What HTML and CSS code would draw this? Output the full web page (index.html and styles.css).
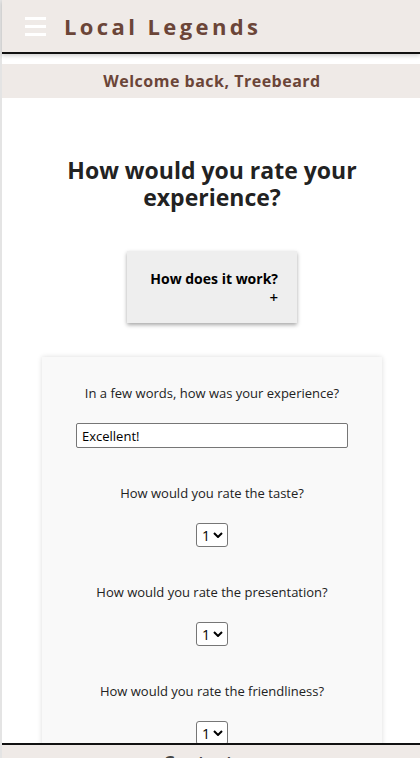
FILE: index.html
```html
<!DOCTYPE html>
<html lang="en">
<head>
<meta charset="utf-8">
<title>Local Legends</title>
<link rel="stylesheet" href="styles.css">
</head>
<body>
<div class="page">
  <header class="topbar">
    <button class="burger" aria-label="Menu"><span></span><span></span><span></span></button>
    <span class="brand">Local Legends</span>
  </header>
  <div class="welcome">Welcome back, Treebeard</div>
  <main class="content">
    <h1 class="title">How would you rate your experience?</h1>
    <div class="how">
      <div class="how-title">How does it work?</div>
      <div class="how-plus">+</div>
    </div>
    <form class="card">
      <div class="group">
        <label class="lbl" for="words">In a few words, how was your experience?</label>
        <input class="text" id="words" type="text" value="Excellent!">
      </div>
      <div class="group">
        <label class="lbl" for="taste">How would you rate the taste?</label>
        <div class="sel"><select id="taste"><option>1</option><option>2</option><option>3</option><option>4</option><option>5</option></select><svg class="chev" viewBox="0 0 10 6" width="10" height="6"><path d="M1 1l4 4 4-4" fill="none" stroke="#000" stroke-width="2"/></svg></div>
      </div>
      <div class="group">
        <label class="lbl" for="pres">How would you rate the presentation?</label>
        <div class="sel"><select id="pres"><option>1</option><option>2</option><option>3</option><option>4</option><option>5</option></select><svg class="chev" viewBox="0 0 10 6" width="10" height="6"><path d="M1 1l4 4 4-4" fill="none" stroke="#000" stroke-width="2"/></svg></div>
      </div>
      <div class="group">
        <label class="lbl" for="friend">How would you rate the friendliness?</label>
        <div class="sel"><select id="friend"><option>1</option><option>2</option><option>3</option><option>4</option><option>5</option></select><svg class="chev" viewBox="0 0 10 6" width="10" height="6"><path d="M1 1l4 4 4-4" fill="none" stroke="#000" stroke-width="2"/></svg></div>
      </div>
    </form>
  </main>
  <footer class="foot">Contact us</footer>
</div>
</body>
</html>
```
FILE: styles.css
```css
* { box-sizing: border-box; }
html, body { margin: 0; padding: 0; }
body {
  font-family: "Open Sans", "Noto Sans", sans-serif;
  color: #222;
  background: #fff;
}
.page {
  border-left: 2px solid #e4e4e4;
  min-height: 758px;
}
.topbar {
  height: 54px;
  background: #efeae7;
  border-bottom: 2px solid #111;
  box-shadow: 0 2px 4px rgba(0,0,0,0.18);
  display: flex;
  align-items: center;
  padding-left: 23px;
  gap: 18px;
}
.burger {
  background: none;
  border: 0;
  padding: 0;
  width: 21px;
  display: flex;
  flex-direction: column;
  gap: 5px;
  margin-top: 0;
}
.burger span {
  display: block;
  height: 3px;
  background: #fff;
}
.brand {
  font-size: 22px;
  font-weight: 700;
  letter-spacing: 3.4px;
  color: #6b4538;
  margin-top: -1px;
}
.welcome {
  margin-top: 10px;
  height: 34px;
  background: #efeae7;
  color: #6b4538;
  font-weight: 700;
  font-size: 16px;
  letter-spacing: 0.5px;
  display: flex;
  align-items: center;
  justify-content: center;
  padding-left: 2px;
}
.content {
  display: flex;
  flex-direction: column;
  align-items: center;
  padding-left: 2px;
  padding-bottom: 80px;
}
.title {
  margin: 59px 0 0;
  width: 310px;
  text-align: center;
  font-size: 23px;
  line-height: 27px;
  font-weight: 700;
  color: #222;
}
.how {
  margin-top: 40px;
  width: 170px;
  height: 72px;
  background: #eeeeee;
  box-shadow: 0 2px 4px rgba(0,0,0,0.35);
  padding: 18px 19px 0 10px;
  text-align: right;
  color: #000;
}
.how-title {
  font-weight: 700;
  font-size: 14px;
  line-height: 20px;
  white-space: nowrap;
}
.how-plus {
  font-size: 15px;
  line-height: 16px;
  font-weight: 600;
}
.card {
  margin-top: 34px;
  width: 340px;
  background: #f9f9f9;
  box-shadow: 0 0 5px rgba(0,0,0,0.14);
  padding: 26px 0 40px;
  display: flex;
  flex-direction: column;
  align-items: center;
  gap: 35px;
}
.group {
  display: flex;
  flex-direction: column;
  align-items: center;
  width: 100%;
}
.lbl {
  font-size: 13px;
  line-height: 20px;
  margin-bottom: 20px;
  color: #222;
}
.text {
  width: 272px;
  height: 25px;
  border: 1px solid #767676;
  border-radius: 2px;
  background: #fff;
  font-family: inherit;
  font-size: 13px;
  padding: 0 5px;
  color: #000;
}
.sel {
  position: relative;
  width: 32px;
  height: 24px;
}
.sel select {
  appearance: none;
  -webkit-appearance: none;
  width: 32px;
  height: 24px;
  border: 1px solid #767676;
  border-radius: 3px;
  background: #fff;
  font-family: inherit;
  font-size: 14px;
  padding: 0 0 0 5px;
  color: #000;
}
.chev {
  position: absolute;
  right: 5px;
  top: 9px;
  pointer-events: none;
}
.foot {
  position: fixed;
  left: 2px;
  right: 0;
  bottom: 0;
  height: 15px;
  background: #efeae7;
  border-top: 2px solid #111;
  text-align: center;
  font-size: 18px;
  font-weight: 700;
  color: #444;
  padding-top: 5px;
  line-height: 24px;
  overflow: hidden;
}
```
